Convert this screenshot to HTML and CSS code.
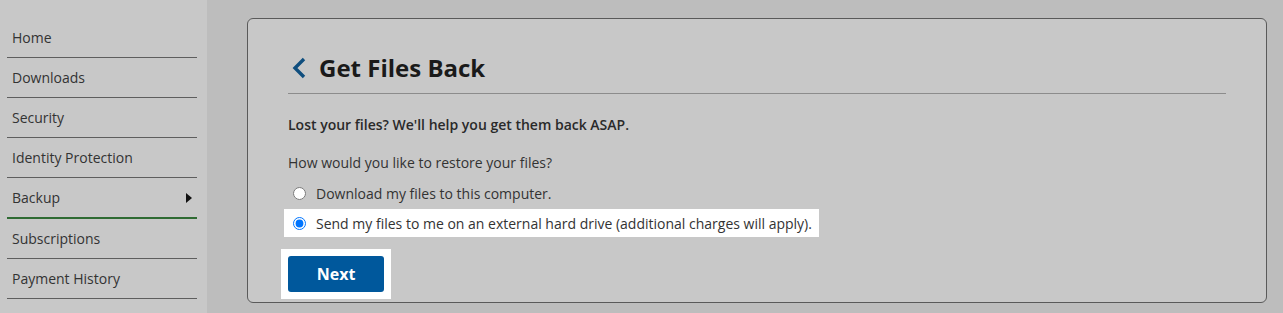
FILE: index.html
```html
<!DOCTYPE html>
<html lang="en">
<head>
<meta charset="utf-8">
<title>Get Files Back</title>
<link rel="stylesheet" href="styles.css">
</head>
<body>
<div class="layout">
  <nav class="sidebar">
    <ul class="menu">
      <li class="menu-item">Home</li>
      <li class="menu-item">Downloads</li>
      <li class="menu-item">Security</li>
      <li class="menu-item">Identity Protection</li>
      <li class="menu-item active">Backup<span class="caret"></span></li>
      <li class="menu-item">Subscriptions</li>
      <li class="menu-item">Payment History</li>
    </ul>
  </nav>
  <main class="main">
    <section class="card">
      <h1 class="title">
        <svg class="back" width="16" height="22" viewBox="0 0 16 22" aria-hidden="true"><path d="M13 2 L4 11 L13 20" fill="none" stroke="#0f4e7e" stroke-width="3.4" stroke-linecap="butt" stroke-linejoin="miter"/></svg>
        <span>Get Files Back</span>
      </h1>
      <p class="lead">Lost your files? We'll help you get them back ASAP.</p>
      <p class="question">How would you like to restore your files?</p>
      <label class="option"><input type="radio" name="restore"> <span>Download my files to this computer.</span></label>
      <label class="option selected"><input type="radio" name="restore" checked> <span>Send my files to me on an external hard drive (additional charges will apply).</span></label>
      <div class="actions"><button class="next" type="button">Next</button></div>
    </section>
  </main>
</div>
</body>
</html>
```
FILE: styles.css
```css
html, body {
  margin: 0;
  padding: 0;
}
*, *::before, *::after {
  box-sizing: border-box;
}
body {
  font-family: "Open Sans", "Liberation Sans", sans-serif;
  color: #333;
  background: #bdbdbd;
}
.layout {
  display: flex;
  height: 313px;
  overflow: hidden;
}
.sidebar {
  width: 207px;
  flex: none;
  background: #c8c8c8;
}
.menu {
  list-style: none;
  margin: 18px 10px 0 7px;
  padding: 0;
}
.menu-item {
  height: 40px;
  border-bottom: 1px solid #5e5e5e;
  padding: 0 0 0 5px;
  display: flex;
  align-items: center;
  justify-content: space-between;
  font-size: 14px;
  color: #333;
}
.menu-item.active {
  height: 41px;
  border-bottom: 2px solid #2f6b33;
}
.caret {
  width: 0;
  height: 0;
  border-top: 5px solid transparent;
  border-bottom: 5px solid transparent;
  border-left: 6px solid #111;
  margin-right: 5px;
}
.main {
  flex: 1;
  padding: 18px 16px 0 40px;
}
.card {
  height: 285px;
  background: #c8c8c8;
  border: 1px solid #5a5a5a;
  border-radius: 6px;
  padding: 33px 40px 0 40px;
  display: flex;
  flex-direction: column;
  align-items: flex-start;
}
.title {
  align-self: stretch;
  margin: 0;
  height: 42px;
  padding-bottom: 9px;
  border-bottom: 1px solid #8c8c8c;
  display: flex;
  align-items: center;
  font-size: 24px;
  font-weight: 700;
  color: #1a1a1a;
  line-height: 32px;
}
.back {
  margin: 0 12px 0 3px;
}
.lead {
  margin: 21px 0 0 0;
  font-size: 14px;
  font-weight: 600;
  line-height: 20px;
  color: #2a2a2a;
}
.question {
  margin: 18px 0 0 0;
  font-size: 14px;
  line-height: 20px;
  color: #333;
}
.option {
  height: 28px;
  display: flex;
  align-items: center;
  padding: 0 7px 0 4px;
  margin-left: -4px;
  font-size: 14px;
  color: #333;
}
.option:first-of-type {
  margin-top: 6px;
}
.option + .option {
  margin-top: 2px;
}
.option input {
  margin: 0 10px 0 5px;
  width: 13px;
  height: 13px;
}
.selected {
  background: #fff;
}
.actions {
  margin: 12px 0 0 -7px;
  padding: 7px;
  background: #fff;
}
.next {
  width: 96px;
  height: 36px;
  border: none;
  border-radius: 3px;
  background: #00589c;
  color: #fff;
  font-family: "Open Sans", "Liberation Sans", sans-serif;
  font-weight: 700;
  font-size: 16px;
  display: block;
}
```
